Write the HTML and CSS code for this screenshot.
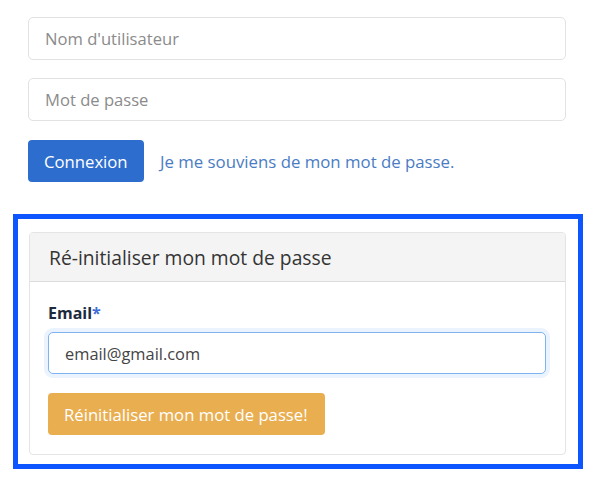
FILE: index.html
```html
<!DOCTYPE html>
<html lang="fr">
<head>
<meta charset="utf-8">
<link rel="stylesheet" href="styles.css">
</head>
<body>
<div class="page">
  <form class="login">
    <input class="field" type="text" placeholder="Nom d'utilisateur">
    <input class="field" type="password" placeholder="Mot de passe">
    <div class="actions">
      <button type="button" class="btn btn-primary">Connexion</button>
      <a class="link" href="#">Je me souviens de mon mot de passe.</a>
    </div>
  </form>
  <div class="highlight">
    <div class="card">
      <div class="card-header">Ré-initialiser mon mot de passe</div>
      <div class="card-body">
        <label class="label">Email<span class="req">*</span></label>
        <input class="field focus" type="email" value="email@gmail.com">
        <button type="button" class="btn btn-warning">Réinitialiser mon mot de passe!</button>
      </div>
    </div>
  </div>
</div>
</body>
</html>
```
FILE: styles.css
```css
* { box-sizing: border-box; }
html, body { margin: 0; background: #fff; }
body {
  font-family: "Open Sans", "DejaVu Sans", sans-serif;
  font-size: 16px;
  color: #212529;
}
.page {
  padding-top: 17px;
}
.login {
  margin-left: 28px;
  width: 538px;
  display: flex;
  flex-direction: column;
}
.field {
  display: block;
  width: 100%;
  height: 43px;
  padding: 0 16px;
  border: 1px solid #e2e2e2;
  border-radius: 5px;
  font-family: inherit;
  font-size: 16.6px;
  color: #495057;
  background: #fff;
  outline: none;
}
.field::placeholder { color: #8b8b8b; }
.login .field + .field { margin-top: 18px; }
.actions {
  margin-top: 19px;
  display: flex;
  align-items: center;
  gap: 16px;
}
.btn {
  height: 42px;
  border: none;
  border-radius: 4px;
  padding: 0 16px;
  font-family: inherit;
  font-size: 16.7px;
  color: #fff;
  text-align: left;
}
.btn-primary { background: #2d6dce; width: 116px; }
.link {
  color: #4a7cc4;
  text-decoration: none;
  font-size: 16.8px;
}
.highlight {
  margin-top: 32px;
  margin-left: 13px;
  width: 570px;
  border: 5px solid #0d55ff;
  padding: 13px 12px 9px 11px;
}
.card {
  border: 1px solid #e4e4e4;
  border-radius: 4px;
  overflow: hidden;
}
.card-header {
  background: #f4f4f4;
  border-bottom: 1px solid #dcdcdc;
  height: 49px;
  padding: 0 19px;
  display: flex;
  align-items: center;
  font-size: 19.3px;
  color: #343434;
}
.card-body {
  padding: 19px 19px 19px 18px;
}
.label {
  display: block;
  font-weight: 700;
  font-size: 16px;
  line-height: 24px;
  color: #1e2b3c;
  margin-bottom: 7px;
}
.req { color: #3f6fd6; }
.field.focus {
  width: 498px;
  height: 42px;
  border-color: #7fb3ef;
  box-shadow: 0 0 0 4px rgba(140, 190, 250, 0.18);
  color: #444;
  font-size: 16.4px;
}
.btn-warning {
  margin-top: 19px;
  background: #e9ae50;
  width: 277px;
}
```
